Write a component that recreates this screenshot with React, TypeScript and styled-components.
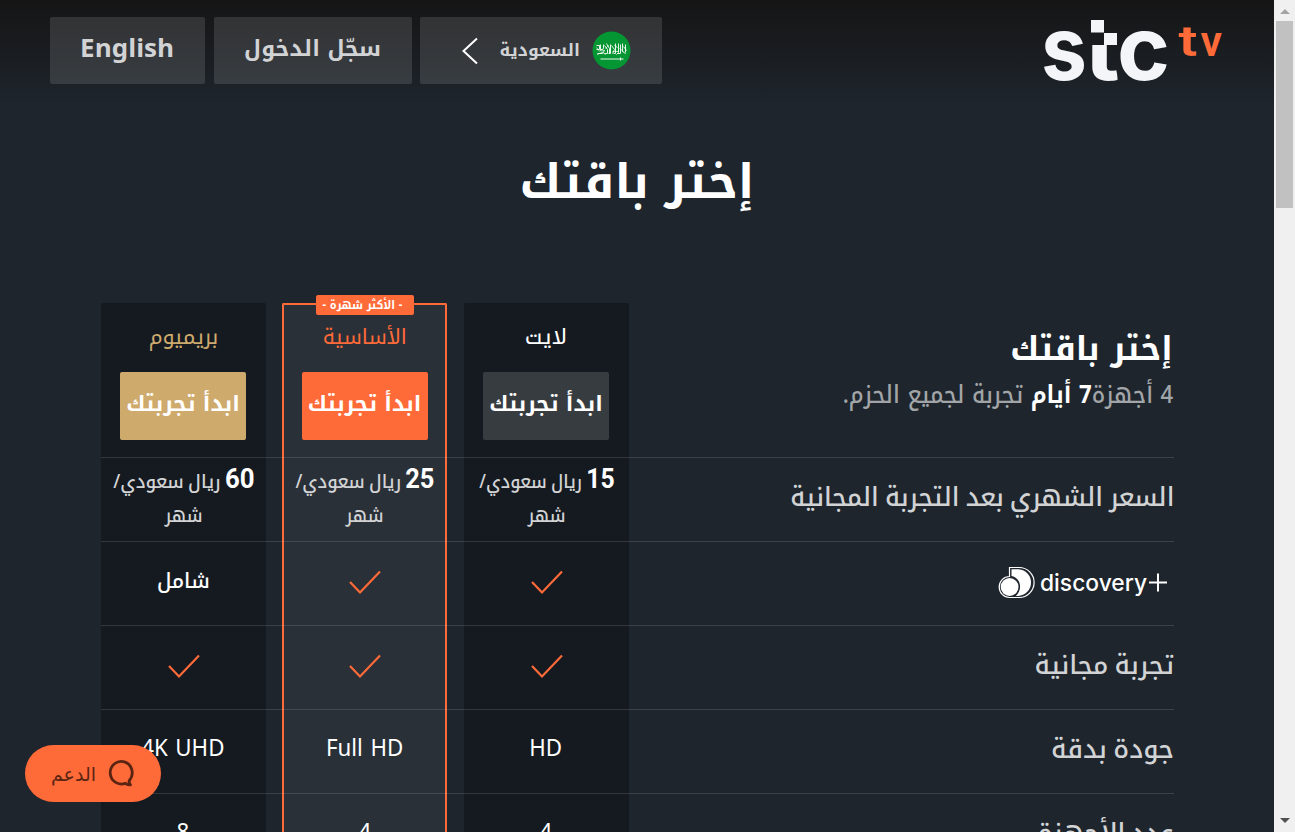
import React from "react";
import styled, { createGlobalStyle, css } from "styled-components";

const Global = createGlobalStyle`
  * { box-sizing: border-box; }
  html, body { margin: 0; background: #1e252d; overflow: hidden; }
  body { font-family: "Noto Kufi Arabic", "Noto Sans", "DejaVu Sans", sans-serif; color: #fff; }
  svg { overflow: visible; flex-shrink: 0; }
`;

const orange = "#ff6a39";
const gold = "#cfaa6d";
const grey = "#d2d3d5";

const Shell = styled.div`
  display: flex;
  width: 1295px;
  height: 832px;
  overflow: hidden;
`;

const Page = styled.div`
  width: 1274px;
  height: 832px;
  overflow: hidden;
  direction: rtl;
`;

const Header = styled.header`
  display: flex;
  justify-content: space-between;
  height: 106px;
  padding: 17px 48px 0 50px;
  background: linear-gradient(#151515, #1e252d);
`;

const Nav = styled.nav`
  display: flex;
  gap: 8.5px;
`;

const NavButton = styled.div<{ $w: number }>`
  display: flex;
  align-items: center;
  justify-content: center;
  width: ${(p) => p.$w}px;
  height: 67px;
  border-radius: 2px;
  background: rgba(255, 255, 255, 0.12);
`;

const CountryButton = styled(NavButton)`
  justify-content: flex-start;
  gap: 12px;
  padding-right: 31px;
`;

const Txt = styled.span<{
  $size: number;
  $bold?: boolean;
  $light?: boolean;
  $color?: string;
  $x?: number;
  $y?: number;
  $word?: number;
  $origin?: string;
}>`
  display: inline-block;
  white-space: nowrap;
  line-height: 1;
  font-size: ${(p) => p.$size}px;
  font-weight: ${(p) => (p.$bold ? 700 : p.$light ? 400 : 500)};
  word-spacing: ${(p) => p.$word || 0}px;
  color: ${(p) => p.$color || "#fff"};
  transform: translateY(${(p) => p.$y || 0}px) scaleX(${(p) => p.$x || 1});
  transform-origin: ${(p) => p.$origin || "center"};
`;

const Strong = styled.b`
  font-family: Roboto, sans-serif;
  font-size: 27px;
  line-height: 1;
  letter-spacing: -0.3px;
  color: #fff;
`;

const Days = styled.b`
  color: #fff;
`;

const Title = styled.h1`
  margin: 51px 0 0;
  height: 146px;
  text-align: center;
`;

const Table = styled.section`
  width: 1073px;
  margin-right: 100px;
`;

const Row = styled.div<{ $h: number }>`
  position: relative;
  display: grid;
  grid-template-columns: 545px 165px 165px 165px;
  height: ${(p) => p.$h}px;
  &::after {
    content: "";
    position: absolute;
    z-index: 1;
    left: 0;
    right: 0;
    bottom: -1px;
    height: 1px;
    background: rgba(255, 255, 255, 0.13);
  }
`;

const Label = styled.div`
  display: flex;
  flex-direction: column;
  justify-content: center;
  align-items: flex-start;
`;

const Intro = styled(Label)`
  justify-content: flex-start;
  gap: 13px;
  padding: 29px 1px 0 0;
`;

const Cell = styled.div<{ $kind: number; $top?: boolean }>`
  position: relative;
  display: flex;
  flex-direction: column;
  align-items: center;
  justify-content: center;
  margin-right: ${(p) => [0, 17, 33][p.$kind]}px;
  width: 165px;
  padding-right: ${(p) => (p.$kind === 1 ? 0 : 1)}px;
  background: ${(p) => (p.$kind === 1 ? "#2a3037" : "#151a20")};
  ${(p) => p.$top && css`justify-content: flex-start; padding-top: 23px; border-radius: 2px 2px 0 0;`}
  ${(p) => p.$kind === 1 && css`border: solid ${orange}; border-width: ${p.$top ? 2 : 0}px 2px 0; ${p.$top && "padding-top: 21px;"}`}
`;

const PlanName = styled.div`
  height: 22px;
`;

const Cta = styled.div<{ $bg: string }>`
  display: flex;
  align-items: center;
  justify-content: center;
  width: 126px;
  height: 68px;
  margin-top: 24px;
  border-radius: 2px;
  background: ${(p) => p.$bg};
`;

const Badge = styled.div`
  position: absolute;
  top: -10px;
  left: 32px;
  display: flex;
  align-items: center;
  justify-content: center;
  width: 98px;
  height: 20px;
  padding-right: 5px;
  border-radius: 2px;
  background: ${orange};
`;

const PriceLine = styled.div`
  height: 34px;
  display: flex;
  align-items: center;
  margin-left: 1px;
`;

const Support = styled.div`
  position: fixed;
  z-index: 2;
  left: 25px;
  top: 745px;
  display: flex;
  align-items: center;
  gap: 12px;
  width: 136px;
  height: 57px;
  padding-right: 27px;
  border-radius: 29px;
  font-family: "DejaVu Sans", sans-serif;
  background: ${orange};
`;

const Scrollbar = styled.div`
  display: flex;
  flex-direction: column;
  align-items: center;
  width: 21px;
  height: 832px;
  padding: 9px 0 9px;
  background: #f0f0f0;
`;

const Thumb = styled.div`
  width: 17px;
  height: 187px;
  margin: 7px 0 auto;
  background: #c1c1c1;
`;

const Logo = () => (
  <svg width="190" height="72" viewBox="1036 17 190 72" direction="ltr">
    <clipPath id="stem"><rect x="1091" y="45" width="26.500" height="40" /></clipPath>
    <g fill="#f4f5f8" fontFamily="Inter" fontWeight="700">
      <text x="1041" y="80" fontSize="88" textLength="46" lengthAdjust="spacingAndGlyphs">s</text>
      <text x="1084" y="80" fontSize="88" clipPath="url(#stem)" textLength="36" lengthAdjust="spacingAndGlyphs">t</text>
      <text x="1117" y="80" fontSize="88" textLength="53" lengthAdjust="spacingAndGlyphs">c</text>
      <rect x="1091" y="20" width="13" height="12.500" />
      <rect x="1104" y="33" width="13" height="12" />
    </g>
    <g fill={orange} fontFamily="Roboto" fontWeight="600" fontSize="43">
      <text x="1178.500" y="56" textLength="19" lengthAdjust="spacingAndGlyphs">t</text>
      <text x="1200.500" y="56">v</text>
    </g>
  </svg>
);

const Flag = () => (
  <svg width="39" height="38" viewBox="0 0.500 38 38">
    <circle cx="19" cy="19" r="19" fill="#049632" />
    <g fill="none" stroke="#fff" strokeWidth="0.900">
      <path d="M4 14h3v4H4M8 13v6l3-2v-4M5 22h5l2-3-4-1M12 14l3 4v4h-3M14 12l3 5v5M18 13v9h-2M19 14l3 4-2 4M23 12v10h-2M22 14l3 2M26 12v9l-2 2M28 13v9h-3M30 12v8l3 2M33 13v8M31 15l3 4" />
      <path d="M4 16l3 4M9 20l4 3M16 14l-3 3M20 20h6M27 17l4 3M4.500 23l5-2" strokeWidth="0.700" />
      <path d="M8 27.500h23M28 26v3" />
    </g>
  </svg>
);

const ChevronIcon = styled.svg`
  margin-right: 9px;
`;

const Chevron = () => (
  <ChevronIcon width="18" height="28" viewBox="0 0 18 28">
    <path d="M16 1.500L2.500 14L16 26.500" fill="none" stroke="#fff" strokeWidth="2" />
  </ChevronIcon>
);

const Check = () => (
  <svg width="33" height="26" viewBox="0 1 33 26">
    <path d="M2 13 L12 23.500 L32 2.500" fill="none" stroke={orange} strokeWidth="2.200" />
  </svg>
);

const Bubble = () => (
  <svg width="26" height="28" viewBox="0 0 26 28">
    <path d="M22.500 24.800c-2 .300-4-.300-5.200-1.600A11 11.300 0 1 1 22 19.500c-1.300 1.600-1.200 3.700.500 5.300z" fill="none" stroke="#5a2412" strokeWidth="2.800" strokeLinejoin="round" />
  </svg>
);

const Arrow = ({ down }: { down?: boolean }) => (
  <svg width="10" height="5" viewBox="0 0 10 5">
    <path d={down ? "M0 0h10L5 5z" : "M0 5h10L5 0z"} fill={down ? "#505050" : "#a3a3a3"} />
  </svg>
);

const Discovery = () => (
  <svg width="176" height="34" viewBox="998 566 176 34" direction="ltr">
    <path d="M1009.500 567.500h9.600a15 15 0 0 1 0 30h-9.600a10.300 10.500 0 0 1 0-21z" fill="none" stroke="#fff" strokeWidth="1.200" />
    <path d="M1011.500 569.200h7.300a13.400 13.400 0 0 1 0 26.700h-3c7-6 5.300-18-4.300-20z" fill="#fff" />
    <circle cx="1009.600" cy="587" r="8.900" fill="#fff" />
    <text x="1040" y="590.500" fill="#fff" fontFamily="Inter" fontWeight="500" fontSize="23" textLength="107" lengthAdjust="spacingAndGlyphs">discovery</text>
    <path d="M1149 582.500h18M1158 573.500v18" stroke="#fff" strokeWidth="2" />
  </svg>
);

const Price = ({ n, stretch }: { n: string; stretch: number }) => (
  <>
    <PriceLine><Txt $size={19} $y={-3.5} $x={stretch} $word={-2} $color={grey}><Strong>{n}</Strong> ريال سعودي/</Txt></PriceLine>
    <PriceLine><Txt $size={19} $x={0.92} $y={-0.5} $color={grey}>شهر</Txt></PriceLine>
  </>
);

const RowLabel = ({ children, stretch = 0.99 }: { children: string; stretch?: number }) => (
  <Label><Txt $size={26.1} $word={-2.5} $y={-1.5} $x={stretch} $origin="right" $color={grey}>{children}</Txt></Label>
);

const Value = ({ children }: { children: string }) => (
  <Txt $size={24} $x={0.93} $y={-3} $light>{children}</Txt>
);

const Plan = ({ name, color, bg, stretch }: { name: string; color: string; bg: string; stretch: number }) => (
  <>
    <PlanName><Txt $size={21.3} $x={stretch} $y={-3} $light $color={color}>{name}</Txt></PlanName>
    <Cta $bg={bg}><Txt $size={21.7} $y={-2} $bold>ابدأ تجربتك</Txt></Cta>
  </>
);

export default function App() {
  return (
    <>
      <Global />
      <Shell>
        <Page>
          <Header>
            <Logo />
            <Nav>
              <CountryButton $w={242}>
                <Flag />
                <Txt $size={17.2} $y={-0.5} $bold $color={grey}>السعودية</Txt>
                <Chevron />
              </CountryButton>
              <NavButton $w={198}><Txt $size={22.2} $y={-1} $bold $color={grey}>سجّل الدخول</Txt></NavButton>
              <NavButton $w={155}><Txt $size={25.5} $x={1.02} $y={-1.6} $bold $color={grey}>English</Txt></NavButton>
            </Nav>
          </Header>
          <Title><Txt $size={47.5} $bold>إختر باقتك</Txt></Title>
          <Table>
            <Row $h={154}>
              <Intro>
                <Txt $size={33.5} $x={0.98} $y={0.5} $origin="right" $bold>إختر باقتك</Txt>
                <Txt $size={24.8} $x={0.895} $y={3.5} $origin="right" $color="#a2a5a8">4 أجهزة<Days>7 أيام</Days> تجربة لجميع الحزم.</Txt>
              </Intro>
              <Cell $kind={0} $top><Plan name="لايت" color="#fff" bg="#373c40" stretch={1.06} /></Cell>
              <Cell $kind={1} $top>
                <Badge><Txt $size={11.6} $x={0.94} $y={0.5} $bold>- الأكثر شهرة -</Txt></Badge>
                <Plan name="الأساسية" color={orange} bg={orange} stretch={0.98} />
              </Cell>
              <Cell $kind={2} $top><Plan name="بريميوم" color={gold} bg={gold} stretch={1.01} /></Cell>
            </Row>
            <Row $h={84}>
              <RowLabel stretch={0.962}>السعر الشهري بعد التجربة المجانية</RowLabel>
              <Cell $kind={0}><Price n="15" stretch={0.915} /></Cell>
              <Cell $kind={1}><Price n="25" stretch={0.94} /></Cell>
              <Cell $kind={2}><Price n="60" stretch={0.955} /></Cell>
            </Row>
            <Row $h={84}>
              <Label><Discovery /></Label>
              <Cell $kind={0}><Check /></Cell>
              <Cell $kind={1}><Check /></Cell>
              <Cell $kind={2}><Txt $size={21.3} $x={0.96} $y={-1}>شامل</Txt></Cell>
            </Row>
            <Row $h={84}>
              <RowLabel>تجربة مجانية</RowLabel>
              <Cell $kind={0}><Check /></Cell>
              <Cell $kind={1}><Check /></Cell>
              <Cell $kind={2}><Check /></Cell>
            </Row>
            <Row $h={84}>
              <RowLabel stretch={1}>جودة بدقة</RowLabel>
              <Cell $kind={0}><Value>HD</Value></Cell>
              <Cell $kind={1}><Value>Full HD</Value></Cell>
              <Cell $kind={2}><Value>4K UHD</Value></Cell>
            </Row>
            <Row $h={84}>
              <RowLabel stretch={0.975}>عدد الأجهزة</RowLabel>
              <Cell $kind={0}><Value>4</Value></Cell>
              <Cell $kind={1}><Value>4</Value></Cell>
              <Cell $kind={2}><Value>8</Value></Cell>
            </Row>
          </Table>
          <Support><Bubble /><Txt $size={19} $y={1} $color="#5a2412">الدعم</Txt></Support>
        </Page>
        <Scrollbar><Arrow /><Thumb /><Arrow down /></Scrollbar>
      </Shell>
    </>
  );
}
